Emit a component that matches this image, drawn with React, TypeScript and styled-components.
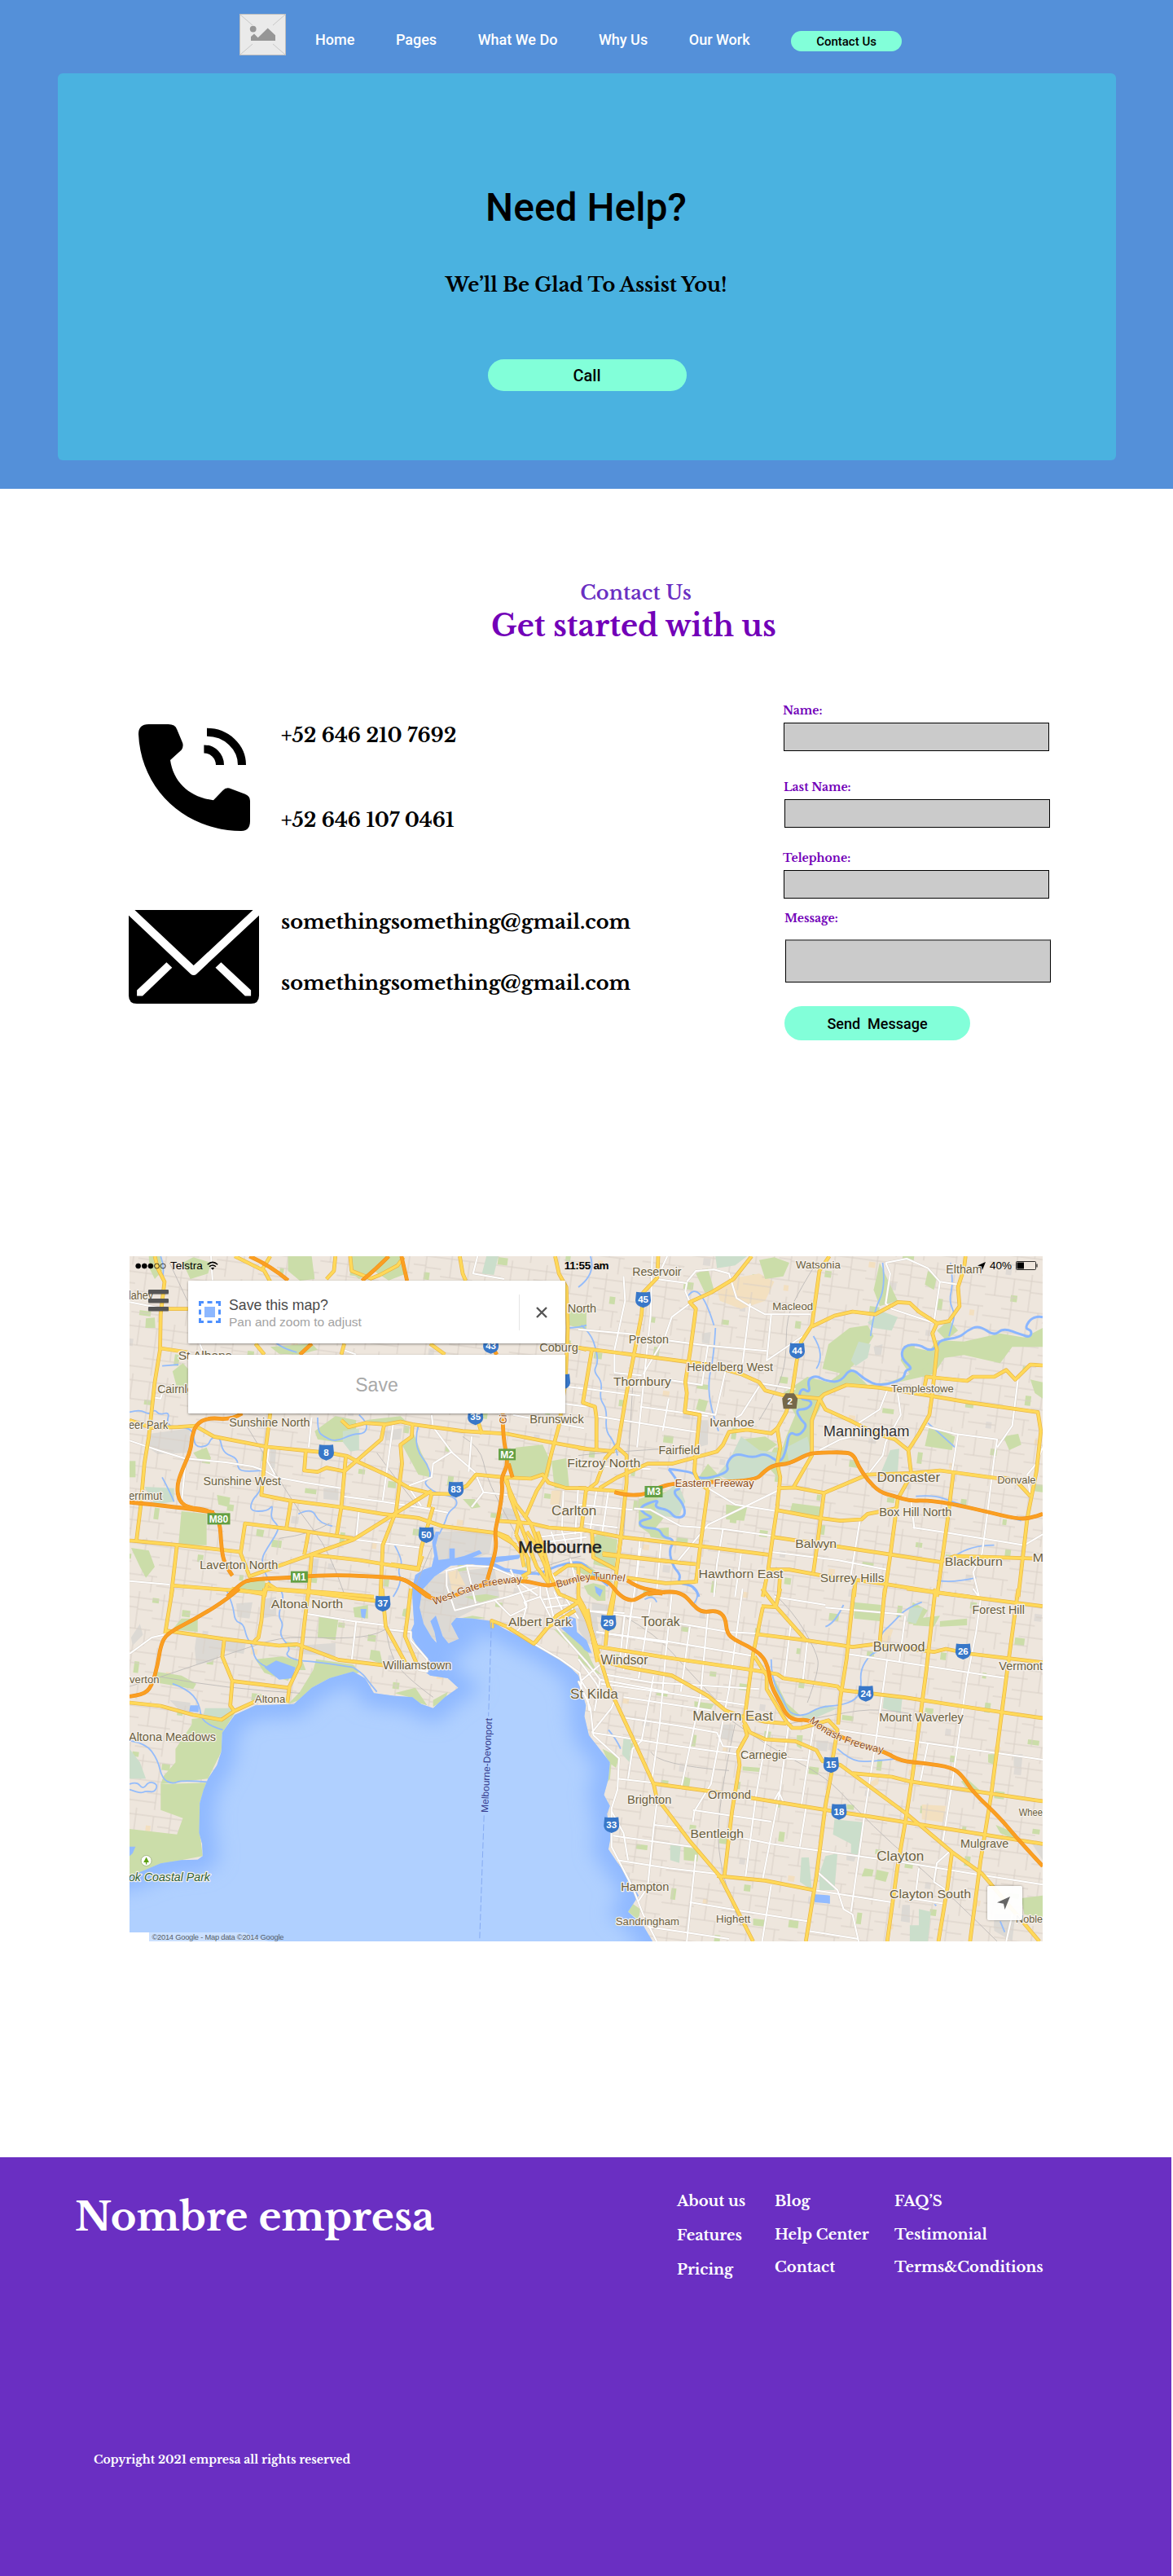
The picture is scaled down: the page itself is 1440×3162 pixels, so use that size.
import React from "react";
import styled, { createGlobalStyle, css } from "styled-components";

/* ---------- theme values ---------- */

const serif = `"Libre Baskerville", "Liberation Serif", serif`;
const sans = `Roboto, "Liberation Sans", sans-serif`;
const helvetica = `"Liberation Sans", Arial, sans-serif`;
const mint = "#82ffd9";
const purple = "#6a2fc2";
const violet = "#7200b8";

const GlobalStyle = createGlobalStyle`
  * { box-sizing: border-box; }
  body { margin: 0; background: #fff; color: #000; font-family: ${sans}; }
  h1, h2, h3, p, ul { margin: 0; padding: 0; font-weight: inherit; }
  a { color: inherit; text-decoration: none; }
  button { border: 0; padding: 0; color: inherit; font: inherit; cursor: pointer; }
`;

const Page = styled.div`
  width: 1440px;
  height: 3162px;
  display: flex;
  flex-direction: column;
  overflow: hidden;
`;

/* ---------- hero ---------- */

const Hero = styled.header`
  height: 600px;
  padding: 0 70px 35px 71px;
  background: #5490d9;
`;

const NavBar = styled.nav`
  height: 90px;
  padding: 17px 0 0 223px;
  display: flex;
  align-items: flex-start;
`;

const NavLinks = styled.ul`
  display: flex;
  gap: 50.6px;
  margin: 20px 50.5px 0 36px;
  list-style: none;
  color: #fff;
  font: 500 18px/24px ${sans};
`;

const Pill = styled.button<{ $w: number; $h: number; $size: number }>`
  width: ${(p) => p.$w}px;
  height: ${(p) => p.$h}px;
  border-radius: 20px;
  background: ${mint};
  font: 500 ${(p) => p.$size}px ${sans};
  white-space: pre;
`;

const NavPill = styled(Pill)`
  margin-top: 21px;
`;

const HeroCard = styled.section`
  height: 475px;
  padding-top: 136px;
  border-radius: 6px;
  background: #4ab2e0;
  display: flex;
  flex-direction: column;
  align-items: center;
`;

const HeroTitle = styled.h1`
  padding-right: 2px;
  font: 500 48px/58px ${sans};
`;

const HeroText = styled.p`
  margin: 51px 0 76px;
  padding-right: 2px;
  font: 700 24px/30px ${serif};
  letter-spacing: -0.07px;
`;

/* ---------- contact ---------- */

const Contact = styled.main`
  padding-top: 113px;
`;

const Heading = styled.div`
  width: 352px;
  margin-left: 602px;
  text-align: center;
  white-space: nowrap;
`;

const Kicker = styled.p`
  padding-left: 5px;
  color: ${purple};
  font: 600 24px/30px ${serif};
  letter-spacing: 0.1px;
`;

const Title = styled.h2`
  margin-top: 3px;
  color: ${violet};
  font: 700 36px/45px ${serif};
`;

const Columns = styled.div`
  display: grid;
  grid-template-columns: 803px 330px;
  margin: 72px 0 265px 158px;
`;

const Channels = styled.div`
  padding-top: 25px;
  display: flex;
  flex-direction: column;
  gap: 94px;
`;

const Channel = styled.div`
  display: flex;
  gap: 27px;
`;

const IconCell = styled.div`
  width: 160px;
  padding-top: 1px;
  display: flex;
  justify-content: center;
`;

const Lines = styled.div<{ $gap: number; $top?: number }>`
  display: flex;
  flex-direction: column;
  gap: ${(p) => p.$gap}px;
  padding-top: ${(p) => p.$top ?? 0}px;
  font: 700 24px/30px ${serif};
`;

const Form = styled.form`
  display: flex;
  flex-direction: column;
  align-items: flex-start;
`;

const Group = styled.label<{ $indent: number; $before: number; $inner?: number }>`
  margin: ${(p) => p.$before}px 0 0 ${(p) => p.$indent}px;
  display: flex;
  flex-direction: column;
  gap: ${(p) => p.$inner ?? 6}px;
  color: ${violet};
  font: 700 14px/18px ${serif};
`;

const field = css`
  width: 326px;
  margin: 0 0 0 1px;
  padding: 0 8px;
  border: 1px solid #000;
  border-radius: 0;
  background: #cbcbcb;
  font: 400 16px ${sans};
  outline: 0;
`;

const Input = styled.input`
  ${field}
  height: 35px;
`;

const Area = styled.textarea`
  ${field}
  height: 53px;
  border-top: 2px solid #777;
  resize: none;
`;

const SendPill = styled(Pill)`
  margin: 29px 0 0 2px;
  border-radius: 21px;
`;

/* ---------- map ---------- */

const MapFrame = styled.section`
  position: relative;
  width: 1121px;
  height: 841px;
  margin-left: 159px;
  overflow: hidden;
  font-family: ${helvetica};
`;

const MapDrawing = styled.svg`
  display: block;
`;

const MapOverlay = styled.div`
  position: absolute;
  inset: 0;
`;

const StatusBar = styled.div`
  height: 23px;
  padding: 0 6px 0 7px;
  display: grid;
  grid-template-columns: 1fr auto 1fr;
  align-items: center;
  font-size: 13.5px;
`;

const Carrier = styled.div`
  display: flex;
  align-items: center;
  gap: 5px;
`;

const Clock = styled.strong`
  font-size: 13.5px;
  letter-spacing: -0.3px;
`;

const Battery = styled(Carrier)`
  justify-content: flex-end;
`;

const MapTools = styled.div`
  display: flex;
  align-items: flex-start;
  margin: 7px 0 0 23px;
`;

const Burger = styled.button`
  width: 25px;
  height: 26px;
  margin: 11px 24px 0 0;
  background: none;
  display: flex;
  flex-direction: column;
  justify-content: space-between;

  span {
    width: 25px;
    height: 5px;
    border-radius: 1px;
    background: #555;
    box-shadow: 0 1px 1px rgba(0, 0, 0, 0.35);
  }
`;

const Cards = styled.div`
  display: flex;
  flex-direction: column;
  gap: 14px;
`;

const cardSkin = css`
  width: 463px;
  background: #fff;
  border-radius: 1px;
  box-shadow: 0 1px 3px rgba(0, 0, 0, 0.4);
`;

const SavePrompt = styled.div`
  ${cardSkin}
  height: 77px;
  display: flex;
  align-items: center;
  padding-left: 13px;
`;

const PromptText = styled.div`
  flex: 1;
  padding: 2px 0 0 10px;
`;

const PromptTitle = styled.p`
  color: #4a4a4a;
  font: 17.7px/21px ${helvetica};
`;

const PromptHint = styled.p`
  color: #a3a3a3;
  font: 15.5px/19px ${helvetica};
`;

const Dismiss = styled.button`
  width: 57px;
  height: 44px;
  padding-right: 2px;
  border-left: 1px solid #e6e6e6;
  background: none;
  display: flex;
  align-items: center;
  justify-content: center;
`;

const SaveButton = styled.button`
  ${cardSkin}
  height: 72px;
  padding-top: 2px;
  color: #a9a9a9;
  font: 23px ${helvetica};
`;

const Locate = styled.button`
  position: absolute;
  right: 25px;
  bottom: 26px;
  width: 43px;
  height: 42px;
  padding-right: 3px;
  border-radius: 2px;
  background: rgba(255, 255, 255, 0.94);
  box-shadow: 0 0 3px rgba(0, 0, 0, 0.4);
  display: flex;
  align-items: center;
  justify-content: center;
`;

/* ---------- footer ---------- */

const Footer = styled.footer`
  width: 1438px;
  height: 514px;
  margin-top: 265px;
  padding: 43px 0 0 92px;
  display: grid;
  grid-template-columns: 739px 120px 147px 200px;
  grid-template-rows: 319px auto;
  background: ${purple};
  color: #fff;
  font-family: ${serif};
`;

const Company = styled.h3`
  font: 700 48px/60px ${serif};
`;

const LinkColumn = styled.ul<{ $gap: number }>`
  display: flex;
  flex-direction: column;
  gap: ${(p) => p.$gap}px;
  list-style: none;
  font: 700 18px/22px ${serif};
  white-space: nowrap;
`;

const Copyright = styled.p`
  padding-left: 23px;
  font: 700 14px/18px ${serif};
`;

/* ---------- icons ---------- */

const ImagePlaceholder = () => (
  <svg width="57" height="51" viewBox="0 0 57 51">
    <rect x=".5" y=".5" width="56" height="50" fill="#eaeaea" stroke="#bfbfbf" />
    <path d="M1 1 16 14M56 1 41 14M1 50 16 37M56 50 41 37" stroke="#c8c8c8" fill="none" />
    <circle cx="16.7" cy="18.6" r="3.9" fill="#969696" />
    <path d="M14 33v-5l4-3.4 4.7 4.7 12-11.8 9.3 8.8V33z" fill="#969696" />
  </svg>
);

const PhoneIcon = () => (
  <svg width="137" height="131" viewBox="0 0 137 131">
    <path d="M0 12Q0 0 12.4 0H36.7Q45 0 47.3 6.4L54.2 23Q55.5 28 52.8 31.4L39 44C43 72 64 90 92 93.2L103.3 81.4Q107 77.500 111.600 78.600L130.900 85.700Q137 88 137 94V119Q137 131 126 131C60 131 3 82 0 12Z" />
    <path d="M84 9.800A43 40.200 0 0 1 127 50M80.400 30.400A19.500 19.600 0 0 1 100 50" fill="none" stroke="#000" strokeWidth="10" />
  </svg>
);

const MailIcon = () => (
  <svg width="160" height="115" viewBox="0 0 160 115">
    <path d="M0 0H160V105Q160 115 150 115H10Q0 115 0 105Z" />
    <path d="M-6-5.700 79.700 75 166-5.700" fill="none" stroke="#fff" strokeWidth="10" strokeLinejoin="round" />
    <path d="M46.400 64.300 53.300 70.700 17 105.400H10.100V98.600ZM113.400 64.300 106.500 70.700 142.800 105.400H150.100V98.600Z" fill="#fff" />
  </svg>
);

const WifiIcon = () => (
  <svg width="14" height="12" viewBox="0 0 14 12" fill="none" stroke="#000" strokeWidth="1.500">
    <path d="M.800 4.200Q7-1.400 13.200 4.200M3 6.700Q7 3.200 11 6.700" />
    <path d="M7 10.800 4.800 8.500Q7 6.800 9.200 8.500Z" fill="#000" stroke="none" />
  </svg>
);

const SignalDots = () => (
  <svg width="38" height="8" viewBox="0 0 38 8">
    {[0, 1, 2, 3, 4].map((i) => (
      <circle key={i} cx={3.7 + i * 7.6} cy="4" r="3" fill={i < 3 ? "#000" : "none"} stroke="#000" strokeWidth=".700" />
    ))}
  </svg>
);

const ArrowIcon = ({ size, color }: { size: number; color: string }) => (
  <svg width={size} height={size} viewBox="0 0 16 16">
    <path d="M16 0 9.500 16 8 8.800 0 7.200Z" fill={color} />
  </svg>
);

const BatteryIcon = () => (
  <svg width="27" height="11" viewBox="0 0 27 11">
    <rect x=".500" y=".500" width="24" height="10" rx="1" fill="none" stroke="#000" strokeWidth=".800" />
    <rect x="1.500" y="1.500" width="8.500" height="8" />
    <path d="M25.500 3.500h1v4h-1z" />
  </svg>
);

const SelectionIcon = () => (
  <svg width="27" height="27" viewBox="0 0 27 27">
    <path d="M1.500 6V1.500H6M10.500 1.500h6M21 1.500h4.500V6M25.500 10.500v6M25.500 21v4.500H21M16.500 25.500h-6M6 25.500H1.500V21M1.500 16.500v-6" fill="none" stroke="#4d90fe" strokeWidth="3" />
    <rect x="7" y="7" width="13" height="13" fill="#8db8ff" />
  </svg>
);

const CloseIcon = () => (
  <svg width="14" height="14" viewBox="0 0 14 14">
    <path d="M1 1 13 13M13 1 1 13" stroke="#555" strokeWidth="2.400" />
  </svg>
);

/* ---------- map data ----------
   The map is drawn from five sheets. Each sheet has its own origin and
   units per pixel; all its points are given in those units. */

type SheetId = "nw" | "ne" | "sw" | "se" | "city";

const sheets: Record<SheetId, { x: number; y: number; sx: number; sy: number }> = {
  nw: { x: 150, y: 1530, sx: 2.7509, sy: 3 },
  ne: { x: 710, y: 1530, sx: 2.7034, sy: 3 },
  sw: { x: 150, y: 1950, sx: 2.7509, sy: 3 },
  se: { x: 710, y: 1950, sx: 2.7034, sy: 3 },
  city: { x: 480, y: 1880, sx: 3, sy: 3 },
};
const ids: SheetId[] = ["nw", "ne", "sw", "se", "city"];

type Layer = Partial<Record<SheetId, string[]>>;

const parks: Layer = {
  nw: [
    "90 36 130 36 135 90 110 120 92 80", "205 60 240 40 300 60 290 100 230 120", "560 36 640 36 650 120 600 126 560 90",
    "768 36 945 36 960 100 900 125 850 90 800 120 768 90", "500 370 640 358 660 380 600 398 530 395", "170 460 205 430 222 450 222 545 190 540",
    "80 265 110 262 112 300 78 300", "650 680 720 625 790 640 790 720 720 720 660 710", "945 730 985 690 1010 760 1030 800 1040 850 1000 840",
    "200 975 285 985 285 1100 190 1100", "1330 740 1420 730 1450 800 1440 850 1320 850 1300 780", "1450 790 1500 780 1510 890 1460 890",
    "1500 240 1568 220 1568 310 1510 290", "395 1240 480 1225 490 1270 390 1275", "820 640 940 625 960 645 900 660",
    "1150 930 1190 930 1210 960 1180 965", "1340 540 1380 530 1380 560", "30 1110 90 1120 110 1180 80 1220 60 1180", "25 790 45 790 45 850 25 850",
    "320 915 365 925 360 960 325 950", "455 1040 480 1045 475 1070 452 1065", "240 760 285 740 300 780 260 790",
  ],
  ne: [
    "680 540 760 480 830 500 900 445 960 510 1030 500 1100 470 1070 420 1080 365 1165 385 1190 345 1280 350 1400 320 1480 335 1541 300 1541 370 1440 370 1400 430 1280 400 1215 410 1180 470 1060 500 960 515 880 510 820 540 800 600 775 650 770 750 700 800 660 800 690 700 720 620",
    "830 360 900 300 960 290 980 330 930 420 880 470 810 450", "390 100 430 80 450 160 420 170", "600 50 650 40 700 60 680 110 620 120",
    "430 800 400 850 420 880 480 860", "200 930 300 900 290 990 240 1060 200 1030", "710 945 815 960 810 995 700 985", "490 950 560 960 550 1010 490 1005",
    "1165 660 1150 735 1240 750 1250 700", "545 710 620 700 660 730 620 760 545 760", "300 1035 300 1080 240 1070 230 1040", "60 1060 130 1080 120 1190 50 1170",
    "1000 60 1060 200 1000 220 980 160", "1190 310 1230 270 1260 310 1220 345", "1410 700 1460 690 1470 730 1430 750", "1500 490 1541 500 1541 560 1515 540",
    "1160 430 1130 470 1160 490 1180 450", "400 560 430 570 420 610 390 600", "1160 90 1190 110 1180 160 1150 140", "650 740 690 740 660 850 620 800",
  ],
  sw: [
    "235 480 380 460 338 530 335 600 290 700 130 720 140 690 180 640 180 590 235 500", "130 720 285 715 262 790 262 900 272 985 200 1000 25 1060 25 885 185 905 205 845 130 815",
    "385 0 480 0 470 20 400 15", "200 110 255 110 255 160 170 150", "655 260 780 280 800 310 700 330 640 365 600 410 560 425 600 380 645 300",
    "450 260 540 250 610 270 620 300 580 300 560 340 480 310", "665 105 730 110 720 190 660 180", "840 225 870 230 880 280 835 260",
    "920 385 990 365 1030 430 1000 420 970 400", "110 305 200 320 250 350 240 370 110 345", "780 70 830 60 830 110 785 105", "1050 410 1100 380 1090 410 1050 435", "950 75 975 70 970 110 945 100",
  ],
  se: [
    "915 50 1005 60 1000 120 915 110", "0 200 30 240 60 300 80 320 40 300 0 260", "350 950 400 960 395 1005 350 1000", "1110 50 1160 80 1130 130 1095 130",
    "385 415 450 425 440 445 385 440", "650 330 690 420 740 470 700 470 650 380", "1470 1140 1541 1130 1541 1210 1480 1200", "1385 870 1450 900 1460 930 1400 900",
    "1270 710 1290 700 1340 750 1300 750", "950 1030 980 1035 975 1060 940 1060", "990 1035 1030 1045 1020 1080 985 1070", "580 1215 625 1220 620 1245 580 1240",
    "180 1160 205 1180 200 1220 165 1190", "80 590 135 620 125 660 100 640", "545 655 605 660 600 675 545 670", "1360 610 1390 610 1385 650 1360 640",
    "1120 110 1200 100 1180 140 1110 135", "1200 120 1290 110 1290 135 1200 140", "345 690 372 700 368 730 345 725", "725 540 745 540 740 590 725 580", "85 660 110 640 105 700 85 730",
  ],
  city: ["600 360 660 375 720 430 745 495 700 460", "710 200 745 190 790 200 790 255 760 255 725 230", "230 325 300 310 350 318 240 330", "270 240 350 230 400 240 330 260", "740 20 790 10 780 70 745 90", "650 125 720 120 760 150 820 185 750 180"],
};

const reserves: Layer = {
  nw: ["75 885 175 890 175 940 110 950", "745 680 800 670 800 750 770 755 745 720", "1230 36 1270 36 1255 105 1215 100"],
  ne: [
    "500 790 540 700 600 750 660 760 650 810 590 860 500 860 460 840", "905 420 930 350 970 360 960 410 920 440", "960 280 1010 240 1060 260 1040 310 980 300",
    "690 740 760 700 770 750 700 800", "1035 750 1065 745 1060 830 1005 830", "250 940 330 870 355 940 330 1000 260 990", "455 36 560 36 520 70 460 80",
  ],
  sw: ["280 440 375 440 365 475 270 480", "25 590 60 640 80 700 25 700"],
  se: [
    "1015 390 1075 400 1070 460 1010 440", "850 850 945 860 930 980 905 975 905 940 845 905", "740 990 765 990 775 1110 735 1080", "820 985 860 975 850 1110 800 1110 800 1050",
    "305 945 340 945 335 1010 305 1000", "150 550 175 555 170 640 145 610", "740 470 820 430 860 440 760 490", "1130 1180 1170 1190 1160 1299 1100 1299 1100 1240 1130 1240", "1100 70 1145 70 1120 130 1090 120",
  ],
};

const sand: Layer = {
  nw: ["1450 900 1485 895 1480 955 1445 950"],
  ne: ["500 120 600 100 650 130 620 200 540 230 470 200 460 160"],
  se: ["1140 795 1220 800 1210 860 1140 850", "1020 150 1045 150 1030 200 1005 195", "960 720 1000 690 995 720 970 735"],
  city: ["210 150 245 140 275 200 225 220"],
};

const industry: Layer = {
  nw: ["90 690 230 670 225 760 120 765 88 740", "1060 1050 1250 1070 1240 1130 1130 1170 1060 1160", "680 890 730 890 730 935 680 930", "640 1150 665 1150 655 1220 632 1215", "500 740 520 750 515 820 498 810", "880 680 945 670 940 710 890 715", "1290 960 1330 970 1330 1010 1280 1000"],
  ne: ["410 320 440 315 435 360 410 355", "980 370 1010 360 1005 400 985 400", "390 640 430 640 430 730 395 740", "1210 1140 1260 1140 1250 1170 1210 1160"],
  sw: ["250 180 420 190 410 240 350 230 300 270 250 280 245 220", "385 55 440 50 430 110 390 105", "590 210 720 200 720 250 600 240", "60 130 70 170 35 210 30 180", "470 40 520 30 520 100 470 110", "160 410 230 420 230 470 200 455", "980 0 1120 0 1140 190 1000 190"],
  se: ["470 500 515 500 510 560 470 550", "790 560 830 560 825 600 790 595", "0 80 60 90 70 180 30 200 0 150", "1380 1200 1450 1200 1440 1299 1380 1260", "1075 1165 1100 1165 1100 1230 1070 1225", "1445 610 1475 610 1470 660 1445 655", "1500 930 1541 940 1541 1000", "890 970 925 975 915 1005 890 1000"],
  city: ["160 0 380 0 350 80 240 100 175 105", "150 160 380 130 400 240 240 320 250 395 210 412 100 330 110 230", "660 285 700 280 740 400 710 390 690 360 690 310", "740 260 830 280 830 330 740 310"],
};

const pools: Layer = {
  sw: ["480 290 520 265 585 290 575 330 530 335", "230 430 258 430 258 455 226 452", "25 950 45 950 35 975 25 985", "805 75 825 75 820 110 808 105"],
  se: ["780 1125 835 1130 835 1160 785 1155", "1180 1160 1190 1165 1185 1170", "0 195 20 205 40 240 20 225"],
  city: ["650 310 680 320 685 370 720 400 740 450 700 420 660 385 625 355 640 350 660 345", "750 200 780 215 770 240 755 225"],
};

const bay =
  "-300 1060 25 1060 80 1035 130 1012 200 1000 255 998 272 985 270 940 260 900 262 790 275 740 290 700 320 650 335 600 338 530 380 465 450 430 580 425 640 365 700 330 780 305 820 330 850 385 920 395 980 400 1010 425 1050 440 1090 400 1135 365 1100 330 1040 320 1027 310 1027 260 999 220 972 165 986 130 981 50 979 0 990 -50 1018 -70 1045 -80 1054 -120 1047 -170 1059 -210 1071 -210 1059 -160 1068 -105 1105 -110 1105 -148 1123 -148 1123 -112 1155 -120 1206 -142 1215 -130 1183 -115 1238 -115 1348 -125 1339 -110 1256 -95 1293 -75 1403 -60 1412 -50 1348 -52 1256 -70 1183 -90 1110 -85 1055 -45 1013 5 1004 70 1018 130 1045 180 1062 200 1055 160 1041 120 1059 100 1082 175 1102 202 1137 185 1111 130 1128 108 1183 110 1247 120 1293 150 1394 205 1458 245 1513 290 1541 320 1550 350 1555 390 1566 430 1561 470 1576 540 1612 590 1647 640 1642 700 1627 760 1647 800 1637 830 1652 900 1642 960 1673 1010 1708 1060 1744 1130 1708 1190 1759 1240 1900 1500 -300 1500";

const creeks: Layer = {
  nw: [
    "25 610 60 600 90 620 110 600 125 620 160 610 150 650 175 670 210 665 240 680 245 740 290 735 300 705 330 700 340 760 390 780 390 820 420 830 470 825",
    "1000 660 990 700 1000 760 1030 800 1045 850 1015 870 1060 910 1120 920 1135 950 1100 980 1090 1020 1070 1060", "470 850 470 900 440 930 430 975 490 975 510 950 500 1000 530 1030 520 1060 490 1110 470 1150 480 1200 500 1240",
    "800 620 830 650 820 690 780 690 720 720 680 700 660 680 660 630", "1500 300 1540 300 1568 290", "595 985 640 960 665 1020 710 1030", "130 36 145 80 135 120", "500 330 520 370 590 390", "135 440 190 435", "915 1290 945 1240 930 1190 950 1160 920 1100", "135 850 160 900 175 940",
  ],
  ne: [
    "10 290 40 320 60 380 65 430 50 460 80 500 70 560 95 600 90 680 120 720 130 770", "455 300 450 400 430 500 440 600 465 680", "1120 920 1180 915 1240 940 1300 960 1400 990 1470 1010", "40 36 60 100 0 150",
    "360 190 400 110 450 290", "1010 60 1020 150 980 240 970 330", "1230 330 1240 290 1250 250 1230 200 1245 130 1235 60", "780 330 820 400 790 450", "1160 650 1210 700 1250 740", "1250 1140 1300 1100 1380 1100", "1190 1230 1240 1240 1320 1220",
  ],
  sw: [
    "350 0 375 60 380 120 410 130 420 180 440 210 450 270 490 290", "530 0 550 20 525 100 545 130 530 170 570 220 550 245 590 265 660 270 780 290", "170 350 220 370 260 420 270 500 340 520",
    "25 560 80 570 120 630 135 700 170 720 200 705 290 712", "780 290 810 310 830 340 860 380", "25 720 50 710 70 740 90 710 120 720 110 750 80 745 60 755 25 740",
  ],
  se: [
    "640 260 640 330 680 410 700 460 750 470 800 435 870 430 920 410 940 370 935 300 970 240 1000 230 1000 170 1040 130 1090 70 1140 50", "860 590 900 630 960 640 1060 625", "380 0 410 20 380 60", "820 140 850 130 880 60", "1400 1225 1415 1265", "220 40 250 20 260 50",
    "100 520 130 560 140 590",
  ],
};

const yarra: Layer = {
  ne: [
    "1541 260 1510 255 1480 300 1505 310 1500 335 1470 325 1410 300 1380 330 1330 290 1290 310 1265 335 1200 345 1190 370 1165 385 1130 360 1080 365 1070 410 1110 450 1085 455 1080 490 1000 515 950 490 905 445 870 500 820 495 790 475 760 490 770 540 740 520 730 560 780 570 760 600 720 600 740 640 760 660 730 700 700 680 690 750 670 800 620 760 580 780 520 760 490 800 500 830 430 855 390 850 380 830 300 820",
    "300 820 350 890 310 900 350 950 355 995 320 1000 300 970 250 960 270 930 200 960 220 985 250 1000 200 1010 210 1035 270 1040 280 1070 320 1080 300 1120 315 1180 340 1210 330 1240 390 1250 400 1290",
  ],
  city: ["540 158 590 135 640 118 700 110 730 140 800 200"],
};

const rails: Layer = {
  nw: ["160 60 220 200", "420 660 520 840 600 980 700 1120 750 1280", "1150 700 1210 740 1230 850 1290 980 1340 1080", "860 760 920 850 1000 960", "530 1075 640 1060 700 1020"],
  ne: ["790 60 740 150 690 260 690 420 660 530 600 640", "180 520 150 1080", "0 770 60 760 360 740"],
  sw: ["130 325 440 210 560 175 740 185 870 170 900 140", "130 325 350 370 600 385", "890 140 900 230 950 320 1050 400", "25 360 130 325"],
  se: ["500 480 640 590 820 690 920 810 1040 940 1180 1070 1390 1299", "150 100 260 170 370 310 500 460", "520 500 460 800 470 1060 540 1240", "650 20 710 80 790 230 800 300 760 420", "690 500 860 460 1000 440 1100 460", "240 600 260 650 500 670"],
  city: ["480 0 560 110", "500 0 570 120", "700 90 600 110 500 160", "150 60 90 200"],
};

const streets: Layer = {
  nw: [
    "25 715 120 750 210 780 350 795 440 810 480 825 520 850 620 870 740 890", "215 780 200 950", "495 740 490 790 515 840", "640 630 630 740", "1045 620 1050 665 1115 760 1190 830 1220 905 1300 915",
    "1115 755 1050 800 1045 850 970 880 975 900 1010 955", "915 655 880 935", "745 920 880 940 1000 960 1100 980", "800 970 790 1080 1010 1110", "1180 700 1170 830", "1220 905 1180 960", "25 1232 160 1245",
    "262 358 270 380 262 398", "300 36 305 125", "1200 36 1185 100 1290 120", "745 380 790 398", "1497 515 1568 525", "1497 580 1568 590", "25 205 120 225", "140 520 130 560 100 555", "1030 1010 1010 1110", "1320 620 1560 670", "1540 890 1530 1060", "1490 900 1485 1050",
  ],
  ne: [
    "295 36 260 120 360 135 355 165 370 205", "360 130 390 90 450 85 500 100 525 190 570 220 620 250 720 250 770 250", "370 210 310 260 285 340 215 470", "150 110 155 200 120 380 120 465 210 475",
    "245 36 240 250 215 520 195 740", "0 305 200 325", "290 345 430 365 625 385", "640 250 625 420 745 330", "570 210 545 430", "430 365 410 510 290 490", "490 450 455 620 353 600", "600 515 540 620 480 660", "610 505 720 525",
    "0 520 205 550", "205 590 430 625", "60 625 400 685", "300 560 280 680", "1020 60 1035 100 1020 210 1040 230 1190 285", "1020 60 1090 45 1160 80 1200 130 1260 140", "1200 130 1180 280",
    "1025 530 1000 600 930 650 910 700 870 710 800 750", "1060 540 1070 620 1020 720 1010 770 960 840", "1145 660 1250 690 1390 710 1380 780 1360 960 1340 1130 1310 1200 1330 1290", "1260 690 1240 830", "1460 480 1440 660 1390 740",
    "1541 740 1520 800 1490 840 1500 920", "185 965 240 970 340 1030 480 1040 640 1065", "660 900 430 1025 325 1165", "430 890 520 950 660 975", "480 1040 460 1170 450 1290", "640 1125 860 1155 1025 1190", "935 1005 900 1240", "540 1130 520 1290",
    "1110 1035 1200 1050 1480 1100 1541 1060", "1105 940 1115 1040", "205 1070 190 1250", "275 1080 260 1270", "0 800 80 810 240 820", "100 900 80 1050", "60 900 40 1040", "20 1020 130 1035", "0 950 180 970",
  ],
  sw: ["25 240 100 180 140 170", "625 93 780 120 890 135", "790 120 775 265", "895 150 975 160 975 190 1030 260 1030 305 1000 300", "1394 205 1480 260 1545 310 1550 340 1568 370"],
  se: [
    "60 160 300 195 590 250", "20 80 290 120 500 160 590 165", "80 315 240 345 600 370", "75 350 300 385 560 430", "150 400 450 450", "150 475 330 505 460 530 480 580 530 585", "45 530 190 555 330 580 525 610 760 632",
    "130 700 250 715", "380 815 640 858", "250 870 330 880", "115 910 375 950", "530 915 640 940 960 990 1060 1005 1310 1050 1541 1090", "130 1000 300 1030 460 1050", "370 1155 560 1190 760 1225", "230 1245 500 1290",
    "780 1110 1040 1155", "790 1040 860 1110 880 1180 910 1200 930 1299", "760 1260 930 1290", "180 40 150 300", "240 50 200 330", "310 20 290 240 270 500 245 700", "370 140 340 380", "430 90 405 400 340 740", "545 0 500 370 440 720 385 820 380 860",
    "250 320 210 560 180 590 165 700", "635 480 590 760 555 1060", "700 480 670 740 610 1080", "780 510 740 800", "755 810 735 950", "705 130 685 320", "760 190 745 340", "1025 260 990 540 950 830 905 1190", "860 520 1100 560 1541 630",
    "890 240 1420 330", "1310 0 1335 40 1320 160 1290 330 1240 720 1210 930", "1085 100 1065 270", "820 70 1080 95", "650 30 820 60", "1240 960 1190 1010 1180 1080 1220 1110", "1130 1030 1120 1120", "1100 1140 1215 1160", "1160 570 1135 710",
    "390 980 360 1299", "640 1090 610 1299", "260 790 250 880 230 1100 200 1150", "0 340 40 440 50 540 135 625 130 740 110 810 110 950 180 1100 215 1200 260 1299", "110 820 150 900 165 1000", "1440 1200 1420 1299", "0 260 60 350 80 400", "650 780 665 750 680 785", "130 385 110 440 45 530",
  ],
  city: [
    "200 145 280 125 370 130 440 160 490 200 540 235", "205 145 205 200 235 290 430 240 540 205", "280 130 312 265", "380 250 440 310 500 280 490 260 550 240 550 200", "440 140 500 270", "550 240 600 340 640 390 720 480 770 545", "640 240 690 320",
    "700 290 860 300", "500 270 480 350 460 370", "700 550 770 490", "770 545 750 660", "700 550 700 580 725 620 730 660", "755 370 860 385 1020 410", "600 220 640 310", "570 200 600 320", "590 150 620 210", "700 60 700 0", "770 545 1020 590", "860 310 840 500", "920 60 880 330",
    "590 0 610 60", "630 0 650 60", "560 40 720 20", "540 20 720 0", "560 250 640 240", "570 280 650 270", "660 100 690 220",
  ],
};

const arterials: Layer = {
  nw: [
    "110 36 120 80 143 130 130 250 128 380 110 500 90 700 75 800 62 960 48 1085", "130 230 222 230", "130 375 222 390", "25 640 100 668 190 665 250 660",
    "245 660 310 700 490 738 620 752 700 760 760 772 800 795 900 845 970 890 1045 910 1110 912 1165 880 1195 840 1290 850 1380 855 1420 840 1440 870 1500 890 1568 890", "500 615 485 740 470 915 560 935 740 960 880 985 1000 1000 1080 1030 1260 1055 1330 1100",
    "620 752 615 825 660 830 690 815 750 828 780 800 875 710 885 655", "740 640 765 665 820 650 890 655 940 645 980 655 1150 680 1300 690 1440 720 1568 745", "980 655 978 700 940 730 945 800 925 975 880 1100 872 1290", "755 775 740 960 725 1060",
    "1045 910 1035 960", "1045 900 920 985 780 1080 610 1145 480 1195 430 1215 400 1130 415 1020 560 1040 780 1075", "48 1085 190 1100 400 1125", "570 935 555 1035", "185 1100 165 1290", "630 1050 615 1135", "640 1135 628 1290", "640 1135 800 1155 1000 1190 1010 1110 1050 960",
    "165 1248 300 1260 480 1275", "490 1240 480 1290", "490 1240 520 1262 700 1275 850 1290", "720 36 715 90 690 120", "770 36 775 90 840 118 870 105 930 70 950 40", "380 36 480 90 500 130", "500 36 470 90", "1140 36 1150 100 1160 126",
    "1462 36 1475 100 1500 150 1505 300 1497 500 1475 660 1450 760 1430 850 1400 900 1360 1000", "750 358 740 398", "450 358 480 398", "1040 358 1090 398", "1497 360 1568 380", "1195 620 1215 690", "1300 860 1310 920 1340 1010 1330 1060",
    "1260 1010 1330 1015 1380 1020 1440 1035 1568 1045", "1340 1010 1400 1180 1440 1240", "1380 1020 1420 1140", "1330 1060 1370 1150 1375 1200 1350 1215", "1290 850 1330 950 1380 1020", "25 1083 50 1085",
  ],
  ne: [
    "265 36 262 115 215 170 210 250 160 540 130 740 160 770 160 870 140 1080 125 1210", "575 36 515 120 440 170 370 205 390 230 372 380 355 500 360 540 353 610 403 620 388 780 385 830 400 870 430 895",
    "833 36 800 90 775 290 740 350 725 420 710 530 690 610 660 670 670 740 660 800 670 850 660 960 645 1070 630 1190 612 1290", "775 295 850 255 910 240 985 250 1060 205 1100 208 1130 240 1190 283 1230 275 1265 220 1260 150 1280 80 1285 36",
    "1190 283 1175 320 1190 380 1175 540 1165 620 1130 690 1095 750 1105 840 1075 900 1060 930 1035 1140 1015 1290", "0 373 190 400 420 433 540 470 600 500 620 530 680 548 800 560 815 545 890 510 1000 520 1170 550 1300 575 1525 610 1535 680 1520 830 1490 1000 1460 1290",
    "800 560 820 600 900 640 990 690 1050 710 1095 750", "800 565 775 640 775 770 715 885", "665 665 640 688 560 675 500 683 480 730 460 755 310 800 230 800 130 850 70 890", "0 890 120 900 160 905", "0 743 120 755", "45 380 15 575 55 590 60 630 60 750", "130 730 90 780 60 870 25 900 10 1040",
    "0 1040 140 1070 400 1103 630 1135", "645 1070 860 1105 1040 1135 1200 1162", "430 895 405 1100 390 1240", "655 970 800 1000 870 1010 940 1005 960 985 1055 965", "660 890 720 888 815 908 960 840 1105 835 1200 825 1400 855", "815 908 795 1080 780 1200",
    "1245 830 1225 1010 1190 1290", "1200 1162 1250 1140 1541 1150", "1145 540 1155 480 1290 495 1310 480 1380 480 1420 455 1450 490 1500 435 1541 438", "1400 850 1450 860 1500 920", "80 1130 340 1165 390 1170", "630 1190 700 1190 800 1210 1000 1240 1200 1275 1300 1290", "920 1230 915 1290", "670 1195 665 1290", "160 1220 290 1240 390 1235",
  ],
  sw: [
    "170 0 145 165", "150 155 340 185 530 210 590 205 640 225 730 262 890 283", "345 185 338 250 372 340 365 430 378 450", "370 340 560 365", "25 420 130 432 240 465 335 483 380 450 450 415", "630 0 615 130 600 280 565 360 558 420",
    "480 0 470 120 460 180 445 195", "370 0 475 20", "480 0 640 15 780 35 890 50", "878 0 890 140 960 280", "975 0 965 90 955 175 1000 290", "1250 145 1248 118 1300 140 1390 203 1440 140 1530 80",
  ],
  se: [
    "0 30 20 70 70 250 100 360 180 550 250 720 260 770 370 930 470 1060 580 1299", "30 75 50 200 75 260", "120 0 100 100 90 210", "60 213 300 255 580 300 660 315 680 330 860 360 870 373 1080 400 1300 438 1541 477",
    "70 265 160 290 310 320 430 395 490 450 540 470 620 490 690 497", "610 0 655 65 755 190 910 215 980 205 1180 233 1220 222 1300 240 1541 272", "595 168 755 190", "670 0 655 68 608 65",
    "612 70 580 240 550 490 570 530 620 555 720 562 790 595 810 635 870 650 950 715 1090 830 1240 970 1340 1050 1530 1299", "585 250 625 320 625 370 690 490 710 513 740 513 830 485 860 520 845 620 840 680 820 800 790 1060 755 1299",
    "915 0 890 260 870 400 862 500", "1017 0 1000 200", "1185 0 1155 300 1110 680 1085 860 1060 1020 1025 1299", "1090 0 1190 15 1540 65", "1460 0 1420 330 1370 760 1335 1000 1300 1299", "550 500 560 540 530 600 535 650 510 820 485 1055",
    "250 718 430 745 820 815 960 838 1200 880 1541 940", "460 1058 620 1075 780 1110", "910 680 1040 693 1100 710 1310 745 1541 783", "1240 970 1225 1100 1195 1299",
  ],
  city: [
    "380 0 430 20 480 80 490 130", "540 0 560 60 590 170 620 230 690 260 730 340 770 470", "690 260 610 310 530 410", "700 260 740 380 760 480", "500 0 540 60 570 130 580 200", "690 130 690 260", "600 160 650 125 700 125 740 150", "0 120 100 135 115 90",
    "830 180 810 310", "740 0 745 95 830 140 850 0", "780 85 1020 110", "500 165 490 180",
  ],
};

const freeways: Layer = {
  nw: [
    "430 36 500 70 560 125", "900 36 860 80 810 126", "943 36 962 126", "640 358 600 398", "405 615 370 638 290 630 250 655 235 700 232 750 200 830 185 880 190 930 215 960 300 972 330 1010 335 1110 345 1170 372 1212",
    "25 942 200 960 310 980", "355 1290 400 1240 440 1225 570 1220 630 1213 750 1210 880 1218 940 1220 990 1250 1040 1290", "1285 615 1285 700 1305 800 1280 850 1285 900 1270 1000 1258 1050 1265 1110 1240 1200 1230 1240", "1305 800 1318 850", "1255 380 1265 398",
  ],
  ne: ["1541 985 1500 1002 1450 1002 1360 978 1230 945 1150 935 1100 937 1050 920 1000 905 960 860 930 810 915 770 890 757 790 760 760 765 700 800 650 805 620 825 585 865 320 870 260 890 225 913 160 917 120 905"],
  sw: ["395 0 360 35 250 110 150 165 130 210 120 280 100 360 70 392 25 397"],
  se: ["230 20 300 8 350 20 380 60 410 88 460 80 488 105 493 165 520 190 560 210 610 245 630 290 640 360 670 420 690 465 720 485 770 482 870 550 1015 600 1070 635 1150 643 1240 658 1275 690 1310 750 1400 845 1460 925 1541 1022"],
  city: ["0 170 40 172 80 195 150 255 230 240 340 190 480 178 570 200 600 195 720 165 800 180 840 235 885 257 920 240 950 222 1000 228", "870 180 910 205 960 215 1010 225"],
};

type Label = [SheetId, string, number, number, number, number, ("city" | "road" | "park" | "capital")?];

/* sheet, text, left, right, baseline, font size, kind */
const labels: Label[] = [
  ["nw", "lahey", 22, 105, 196, 14], ["nw", "Sunshine North", 361, 634, 663, 14], ["nw", "Sunshine West", 274, 536, 880, 14], ["nw", "St Albans", 189, 370, 418, 14], ["nw", "Cairnlea", 119, 262, 540, 14],
  ["nw", "eer Park", 22, 155, 672, 14], ["nw", "errimut", 22, 135, 932, 14], ["nw", "Laverton North", 262, 526, 1187, 14], ["nw", "Coburg", 1409, 1540, 387, 14], ["nw", "Brunswick", 1376, 1559, 651, 14],
  ["ne", "Fitzroy North", -37, 206, 812, 14.5], ["ne", "Carlton", -89, 60, 990, 16], ["ne", "Melbourne", -200, 78, 1129, 20, "capital"], ["ne", "North", -36, 60, 242, 14],
  ["ne", "Reservoir", 179, 342, 107, 14], ["ne", "Watsonia", 722, 870, 81, 13], ["ne", "Macleod", 644, 779, 233, 13.5], ["ne", "Eltham", 1220, 1340, 100, 14], ["ne", "Preston", 167, 300, 356, 14],
  ["ne", "Heidelberg West", 360, 646, 459, 14], ["ne", "Thornbury", 116, 308, 512, 15.5], ["ne", "Templestowe", 1038, 1246, 538, 13], ["ne", "Ivanhoe", 435, 584, 662, 15], ["ne", "Manningham", 813, 1099, 700, 18, "city"],
  ["ne", "Fairfield", 266, 403, 766, 14], ["ne", "Eastern Freeway", 321, 583, 886, 13, "road"], ["ne", "Doncaster", 991, 1201, 866, 16.5], ["ne", "Donvale", 1390, 1518, 872, 13.5], ["ne", "Box Hill North", 998, 1239, 994, 14],
  ["ne", "Balwyn", 720, 857, 1109, 15], ["ne", "Blackburn", 1216, 1408, 1176, 15], ["ne", "Hawthorn East", 399, 680, 1222, 15.5], ["ne", "Surrey Hills", 802, 1015, 1237, 15], ["ne", "M", 1508, 1544, 1160, 15],
  ["sw", "Altona North", 503, 746, 71, 15], ["sw", "Albert Park", 1304, 1518, 137, 15], ["sw", "Williamstown", 880, 1112, 297, 14], ["sw", "verton", 25, 125, 347, 13.5], ["sw", "Altona", 448, 551, 421, 13.5],
  ["sw", "Altona Meadows", 22, 316, 560, 14.5], ["sw", "ok Coastal Park", 22, 297, 1076, 15, "park"],
  ["se", "St Kilda", -27, 132, 405, 17], ["se", "Toorak", 209, 337, 138, 16], ["se", "Windsor", 74, 231, 280, 16], ["se", "Malvern East", 379, 646, 485, 16.5], ["se", "Forest Hill", 1307, 1481, 94, 14], ["se", "Burwood", 978, 1150, 230, 16],
  ["se", "Vermont", 1396, 1541, 300, 14], ["se", "Mount Waverley", 998, 1278, 489, 15], ["se", "Carnegie", 538, 693, 627, 14.5], ["se", "Brighton", 162, 309, 792, 14.5], ["se", "Ormond", 430, 573, 773, 14.5], ["se", "Bentleigh", 372, 549, 919, 15.5],
  ["se", "Hampton", 141, 301, 1114, 15], ["se", "Sandringham", 124, 335, 1238, 13.5], ["se", "Highett", 457, 571, 1229, 13.5], ["se", "Clayton", 990, 1147, 1002, 16.5], ["se", "Clayton South", 1033, 1303, 1140, 15.5],
  ["se", "Mulgrave", 1268, 1428, 954, 14.5], ["se", "Whee", 1462, 1541, 838, 13.5], ["se", "Noble", 1452, 1541, 1230, 13.5],
];

const labelColor = { city: "#333", road: "#8c4a14", park: "#2f6339", capital: "#222" };

const routes: [SheetId, string, number, number][] = [
  ["nw", "8", 689, 758], ["nw", "83", 1127, 895], ["nw", "50", 1027, 1062], ["nw", "43", 1245, 365], ["nw", "35", 1193, 628], ["nw", "5", 1487, 498],
  ["ne", "45", 215, 196], ["ne", "44", 726, 384], ["sw", "37", 880, 55], ["se", "29", 100, 126], ["se", "26", 1277, 231], ["se", "24", 954, 386], ["se", "15", 839, 649], ["se", "18", 865, 821], ["se", "33", 110, 870],
];

const motorways: [SheetId, string, number, number, number][] = [
  ["nw", "M2", 1300, 766, 21], ["nw", "M80", 326, 1003, 28], ["nw", "M1", 598, 1217, 21], ["ne", "M3", 250, 903, 22],
];

/* ---------- map drawing ---------- */

const place = (id: SheetId, x: number, y: number) => {
  const s = sheets[id];
  return { x: s.x + x / s.sx, y: s.y + y / s.sy };
};

const sheetTransform = (id: SheetId) => {
  const s = sheets[id];
  return `translate(${s.x} ${s.y}) scale(${1 / s.sx} ${1 / s.sy})`;
};

/* rounds the corners of a point list: a quadratic between segment midpoints */
const smooth = (points: string) => {
  const n = points.split(" ").map(Number);
  const p: [number, number][] = [];
  for (let i = 0; i < n.length; i += 2) p.push([n[i], n[i + 1]]);
  if (p.length < 3) return `M${p.map((q) => q.join(" ")).join("L")}`;
  let d = `M${p[0].join(" ")}`;
  for (let i = 1; i < p.length - 1; i++) {
    const last = i === p.length - 2;
    const ex = last ? p[i + 1][0] : (p[i][0] + p[i + 1][0]) / 2;
    const ey = last ? p[i + 1][1] : (p[i][1] + p[i + 1][1]) / 2;
    d += `Q${p[i].join(" ")} ${ex} ${ey}`;
  }
  return d;
};

const Areas = ({ layer, fill }: { layer: Layer; fill: string }) => (
  <g fill={fill}>
    {ids.map((id) => (
      <g key={id} transform={sheetTransform(id)}>
        {(layer[id] ?? []).map((pts) => <polygon key={pts} points={pts} />)}
      </g>
    ))}
  </g>
);

const Ways = ({ layer, color, width, round, dash }: { layer: Layer; color: string; width: number; round?: boolean; dash?: string }) => (
  <g fill="none" stroke={color} strokeWidth={width} strokeLinejoin="round" strokeDasharray={dash}>
    {ids.map((id) => (
      <g key={id} transform={sheetTransform(id)}>
        {(layer[id] ?? []).map((pts) =>
          round ? <path key={pts} d={smooth(pts)} vectorEffect="non-scaling-stroke" /> : <polyline key={pts} points={pts} vectorEffect="non-scaling-stroke" />,
        )}
      </g>
    ))}
  </g>
);

const halo = { paintOrder: "stroke" as const, stroke: "#f6f1eb", strokeWidth: 2.5, strokeLinejoin: "round" as const };

const MelbourneMap = () => (
  <MapDrawing width="1121" height="841" viewBox="159 1542 1121 841" fontFamily={helvetica}>
    <defs>
      <pattern id="lanes" width="74" height="66" patternUnits="userSpaceOnUse" patternTransform="rotate(7.500)">
        <path d="M0 8H74M0 31H40M22 46H74M12 0V31M34 8V66M55 0V46M68 46V66M40 20H55M0 57H34M55 22H74" fill="none" stroke="#d8cfc6" />
      </pattern>
      <pattern id="greens" width="230" height="190" patternUnits="userSpaceOnUse" patternTransform="rotate(7.500)">
        <path d="M20 30h10v8h-10zM92 14h7v12h-7zM150 52h14v6h-14zM58 84h8v8h-8zM200 100h6v14h-6zM118 120h12v9h-12zM30 150h7v9h-7zM170 160h9v6h-9zM84 168h5v7h-5zM212 20h8v6h-8z" fill="#cbdda9" />
        <path d="M48 52h7v8h-7zM138 88h9v9h-9zM190 140h7v7h-7z" fill="#dfdad5" />
        <path d="M110 66h8v7h-8zM10 108h6v7h-6z" fill="#f3dfc0" />
      </pattern>
      <clipPath id="bay"><polygon points={bay} /></clipPath>
      <filter id="shallows" x="-20%" y="-20%" width="140%" height="140%"><feGaussianBlur stdDeviation="34" /></filter>
      <path id="westGate" d="M533 1970C557 1963 585 1945 642 1942" />
      <path id="burnley" d="M684 1949C707 1943 730 1933 768 1942" />
      <path id="monash" d="M993 2113C1017 2134 1043 2144 1088 2153" />
    </defs>

    <rect x="159" y="1542" width="1121" height="841" fill="#eee6dd" />
    <rect x="159" y="1542" width="1121" height="841" fill="url(#greens)" />
    <Areas layer={industry} fill="#dcd9d4" />
    <Areas layer={sand} fill="#f3e0c0" />
    <rect x="159" y="1542" width="1121" height="841" fill="url(#lanes)" />
    <Areas layer={parks} fill="#cbdda9" />
    <Areas layer={reserves} fill="#cbdecb" />
    <g transform={sheetTransform("sw")}>
      <polygon points={bay} fill="#b0d0ff" />
      <g clipPath="url(#bay)">
        <polygon points={bay} fill="none" stroke="#8eb8ff" strokeWidth="100" filter="url(#shallows)" />
      </g>
    </g>
    <Areas layer={pools} fill="#92bbff" />
    <Ways layer={creeks} color="#94bcfb" width={1.8} round />
    <Ways layer={yarra} color="#8ab6ff" width={3} round />
    <Ways layer={rails} color="#bdbab8" width={0.9} round />
    <Ways layer={streets} color="#d9d0c6" width={3} />
    <Ways layer={streets} color="#fff" width={2} />
    <Ways layer={arterials} color="#e9b645" width={4.7} />
    <Ways layer={arterials} color="#ffd95a" width={3.3} />
    <Ways layer={freeways} color="#ee9018" width={4.8} round />
    <Ways layer={freeways} color="#fb9f22" width={3.6} round />
    <Ways layer={{ sw: ["1247 125 1237 470", "1222 835 1207 1295"] }} color="#86abf3" width={1} dash="8 3" />

    {routes.map(([id, text, x, y]) => {
      const p = place(id, x, y);
      return (
        <g key={text} transform={`translate(${p.x} ${p.y})`}>
          <path d="M-8.500-9.500Q0-8.500 8.500-9.500L9.500 1Q9 6 5 8L0 10-5 8Q-9 6-9.500 1Z" fill="#3877c8" />
          <text y="4" textAnchor="middle" fontSize="11.500" fontWeight="700" fill="#fff">{text}</text>
        </g>
      );
    })}
    {motorways.map(([id, text, x, y, w]) => {
      const p = place(id, x, y);
      return (
        <g key={text} transform={`translate(${p.x} ${p.y})`}>
          <rect x={-w / 2} y="-7" width={w} height="14" fill="#64a044" />
          <text y="4.300" textAnchor="middle" fontSize="12" fontWeight="700" fill="#fff">{text}</text>
        </g>
      );
    })}
    <g transform="translate(969.700 1719.700)">
      <path d="M-5-9.500H5L9.500-3 8 9.500H-8L-9.500-3Z" fill="#75684a" />
      <text y="4" textAnchor="middle" fontSize="11.500" fontWeight="700" fill="#fff">2</text>
    </g>
    <text transform="translate(621.500 1748)rotate(-88)" fontSize="12" fill="#8c4a14" {...halo}>Ci</text>

    {labels.map(([id, text, x0, x1, y, size, kind]) => {
      const a = place(id, x0, y);
      const b = place(id, x1, y);
      return (
        <text
          key={text}
          x={a.x}
          y={a.y}
          textLength={b.x - a.x}
          lengthAdjust="spacingAndGlyphs"
          fontSize={size}
          fontStyle={kind === "park" ? "italic" : undefined}
          fill={kind ? labelColor[kind] : "#6b6040"}
          {...halo}
          {...(kind === "capital" ? { stroke: "#222", strokeWidth: 0.5 } : {})}
        >
          {text}
        </text>
      );
    })}
    <g fontSize="12.500" fill="#8c4a14" {...halo} strokeWidth="1.500">
      <text><textPath href="#westGate" textLength="112">West Gate Freeway</textPath></text>
      <text><textPath href="#burnley" textLength="84">Burnley Tunnel</textPath></text>
      <text><textPath href="#monash" textLength="100">Monash Freeway</textPath></text>
    </g>
    <text transform="translate(599 2225)rotate(-87.500)" textLength="116" fontSize="12" fill="#34398c">Melbourne-Devonport</text>

    <circle cx="179.600" cy="2284" r="6.500" fill="#fff" stroke="#a9bb88" />
    <path d="M179.600 2279.500 183 2286H180.300V2288.500H178.900V2286H176.200Z" fill="#5ca012" />
    <rect x="159" y="2372" width="24" height="11" fill="#fff" />
    <path d="M183 2372H300L330 2383H183Z" fill="#fff" opacity=".350" />
    <text x="186.400" y="2380.500" fontSize="9.300" textLength="162" fill="#555d68">©2014 Google - Map data ©2014 Google</text>
  </MapDrawing>
);

/* ---------- page ---------- */

const menu = ["Home", "Pages", "What We Do", "Why Us", "Our Work"];
const footerLinks = [
  { gap: 20, items: ["About us", "Features", "Pricing"] },
  { gap: 18.5, items: ["Blog", "Help Center", "Contact"] },
  { gap: 18.5, items: ["FAQ’S", "Testimonial", "Terms&Conditions"] },
];

export default function App() {
  return (
    <Page>
      <GlobalStyle />
      <Hero>
        <NavBar>
          <ImagePlaceholder />
          <NavLinks>
            {menu.map((item) => <li key={item}><a href="#">{item}</a></li>)}
          </NavLinks>
          <NavPill $w={136} $h={25} $size={15}>Contact Us</NavPill>
        </NavBar>
        <HeroCard>
          <HeroTitle>Need Help?</HeroTitle>
          <HeroText>We’ll Be Glad To Assist You!</HeroText>
          <Pill $w={244} $h={39} $size={20}>Call</Pill>
        </HeroCard>
      </Hero>

      <Contact>
        <Heading>
          <Kicker>Contact Us</Kicker>
          <Title>Get started with us</Title>
        </Heading>
        <Columns>
          <Channels>
            <Channel>
              <IconCell><PhoneIcon /></IconCell>
              <Lines $gap={74}><p>+52 646 210 7692</p><p>+52 646 107 0461</p></Lines>
            </Channel>
            <Channel>
              <IconCell><MailIcon /></IconCell>
              <Lines $gap={45} $top={1}><p>somethingsomething@gmail.com</p><p>somethingsomething@gmail.com</p></Lines>
            </Channel>
          </Channels>
          <Form>
            <Group $indent={0} $before={0}>Name:<Input /></Group>
            <Group $indent={1} $before={35}>Last Name:<Input /></Group>
            <Group $indent={0} $before={28}>Telephone:<Input /></Group>
            <Group $indent={2} $before={15} $inner={17}>Message:<Area /></Group>
            <SendPill type="button" $w={228} $h={42} $size={18}>{"Send\u00a0 Message"}</SendPill>
          </Form>
        </Columns>
      </Contact>

      <MapFrame>
        <MelbourneMap />
        <MapOverlay>
          <StatusBar>
            <Carrier><SignalDots />Telstra <WifiIcon /></Carrier>
            <Clock>11:55 am</Clock>
            <Battery><ArrowIcon size={10} color="#000" />40%<BatteryIcon /></Battery>
          </StatusBar>
          <MapTools>
            <Burger aria-label="Menu"><span /><span /><span /></Burger>
            <Cards>
              <SavePrompt>
                <SelectionIcon />
                <PromptText>
                  <PromptTitle>Save this map?</PromptTitle>
                  <PromptHint>Pan and zoom to adjust</PromptHint>
                </PromptText>
                <Dismiss aria-label="Dismiss"><CloseIcon /></Dismiss>
              </SavePrompt>
              <SaveButton>Save</SaveButton>
            </Cards>
          </MapTools>
          <Locate aria-label="My location"><ArrowIcon size={16} color="#666" /></Locate>
        </MapOverlay>
      </MapFrame>

      <Footer>
        <Company>Nombre empresa</Company>
        {footerLinks.map(({ gap, items }) => (
          <LinkColumn key={items[0]} $gap={gap}>
            {items.map((item) => <li key={item}><a href="#">{item}</a></li>)}
          </LinkColumn>
        ))}
        <Copyright>Copyright 2021 empresa all rights reserved</Copyright>
      </Footer>
    </Page>
  );
}
